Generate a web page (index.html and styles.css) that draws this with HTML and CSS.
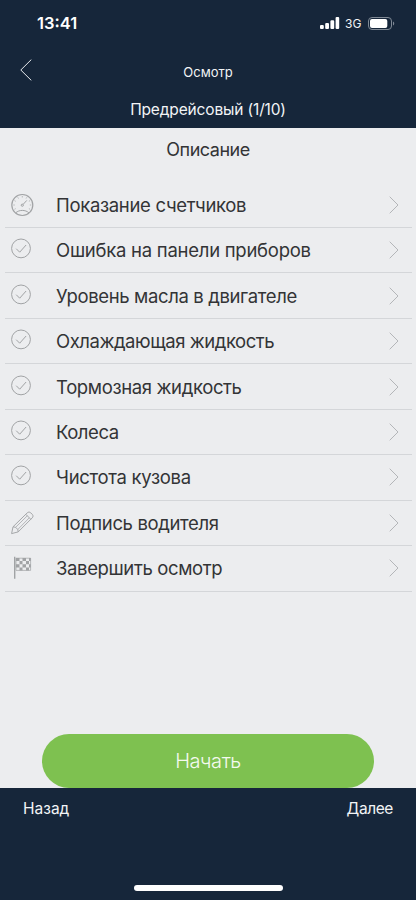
FILE: index.html
```
<!DOCTYPE html>
<html lang="ru">
<head>
<meta charset="utf-8">
<meta name="viewport" content="width=device-width, initial-scale=1">
<title>Осмотр</title>
<link rel="stylesheet" href="styles.css">
</head>
<body>
<svg class="defs" width="0" height="0">
  <defs>
    <symbol id="chevron" viewBox="0 0 10 18"><path d="M.7 .7 9 9 .7 17.3"/></symbol>
    <symbol id="check" viewBox="0 0 24 24"><circle cx="11" cy="10.4" r="9.4"/><path d="m6.2 10.7 3.5 3.5 6.4-7.2"/></symbol>
    <symbol id="gauge" viewBox="0 0 24 24">
      <circle cx="12.3" cy="12" r="10.5" stroke-width="1.2"/>
      <path d="M5.7 19.8c3.5-3.2 9.7-3.2 13.2 0"/>
      <circle cx="12.3" cy="12.2" r="1.1"/>
      <path d="m13.1 11.4 3.7-4"/>
      <path d="M12.3 3v1.5M7.8 4.3l.7 1.2M4.5 7.6l1.2.7M3.3 12h1.5M4.5 16.3l1.2-.7M16.8 4.3l-.7 1.2M20.1 7.6l-1.2.7M21.3 12h-1.5M20.1 16.3l-1.2-.7" stroke-width=".7"/>
    </symbol>
    <symbol id="pencil" viewBox="0 0 24 24">
      <path d="M1.600 22.600 3 15.800 17.200 1.900c1.100-1.100 2.500-1.100 3.600 0l1.400 1.400c1.100 1.100 1.100 2.500 0 3.600L8.200 20.900zM3 15.800l2.600.5 2.200 2.200.4 2.400M15.800 3.300l5 5" stroke-width=".95"/>
      <path d="M5.600 16.300 17.300 4.800M7.800 18.500 19.300 6.800" stroke-width=".75"/>
    </symbol>
    <symbol id="flag" viewBox="0 0 24 24">
      <path d="M4.700 .7v22" stroke-width="1.400"/>
      <path d="M6 2.200h14.600v12.200H6z" stroke-width=".7"/>
      <path class="fill" d="M6 2h3.500v3H6zM12.500 2h3.500v3h-3.500zM9.500 5h3v3.200h-3zM16 5h3v3.200h-3zM6 8.200h3.500v3.200H6zM12.500 8.200h3.500v3.200h-3.500zM19 8.200h1.800v3.200H19zM9.500 11.400h3v3.200h-3zM16 11.400h3v3.200h-3zM19 2h1.800v3H19z"/>
    </symbol>
  </defs>
</svg>
<div class="screen">
  <header class="header">
    <div class="status">
      <span class="time">13:41</span>
      <div class="indicators">
        <svg class="signal" viewBox="0 0 20 12"><rect x="0" y="8" width="3.8" height="4" rx="1.1"/><rect x="5.2" y="6" width="3.8" height="6" rx="1.1"/><rect x="10.4" y="3.3" width="3.8" height="8.7" rx="1.1"/><rect x="15.6" y="0" width="3.6" height="12" rx="1.1"/></svg>
        <span class="network">3G</span>
        <svg class="battery" viewBox="0 0 27 13"><rect class="shell" x=".5" y=".5" width="23" height="12" rx="3.5"/><rect x="2" y="2" width="17.3" height="9" rx="2"/><path class="cap" d="M25 4.500v4c1.700-.7 1.700-3.300 0-4z"/></svg>
      </div>
    </div>
    <nav class="navbar">
      <svg class="back" viewBox="0 0 12 22"><path d="M11.300.6.800 11l10.500 10.400"/></svg>
      <h1 class="title">Осмотр</h1>
    </nav>
    <p class="subtitle">Предрейсовый (1/10)</p>
  </header>
  <main class="content">
    <h2 class="heading">Описание</h2>
    <ul class="list">
      <li class="row"><svg class="icon"><use href="#gauge"/></svg><span class="label normal">Показание счетчиков</span><svg class="arrow"><use href="#chevron"/></svg></li>
      <li class="row"><svg class="icon"><use href="#check"/></svg><span class="label loose">Ошибка на панели приборов</span><svg class="arrow"><use href="#chevron"/></svg></li>
      <li class="row"><svg class="icon"><use href="#check"/></svg><span class="label">Уровень масла в двигателе</span><svg class="arrow"><use href="#chevron"/></svg></li>
      <li class="row"><svg class="icon"><use href="#check"/></svg><span class="label tight">Охлаждающая жидкость</span><svg class="arrow"><use href="#chevron"/></svg></li>
      <li class="row"><svg class="icon"><use href="#check"/></svg><span class="label">Тормозная жидкость</span><svg class="arrow"><use href="#chevron"/></svg></li>
      <li class="row"><svg class="icon"><use href="#check"/></svg><span class="label tight">Колеса</span><svg class="arrow"><use href="#chevron"/></svg></li>
      <li class="row"><svg class="icon"><use href="#check"/></svg><span class="label normal">Чистота кузова</span><svg class="arrow"><use href="#chevron"/></svg></li>
      <li class="row"><svg class="icon"><use href="#pencil"/></svg><span class="label">Подпись водителя</span><svg class="arrow"><use href="#chevron"/></svg></li>
      <li class="row"><svg class="icon"><use href="#flag"/></svg><span class="label">Завершить осмотр</span><svg class="arrow"><use href="#chevron"/></svg></li>
    </ul>
    <button class="start">Начать</button>
  </main>
  <footer class="footer">
    <div class="actions"><span class="prev">Назад</span><span class="next">Далее</span></div>
    <div class="home"></div>
  </footer>
</div>
</body>
</html>
```
FILE: styles.css
```
* { box-sizing: border-box; margin: 0; padding: 0; }
body { font-family: Inter, "Liberation Sans", sans-serif; background: #ecedef; }
.defs { position: absolute; }
.screen { display: flex; flex-direction: column; width: 416px; height: 900px; overflow: hidden; }
.header { height: 128px; flex: none; background: #16263a; color: #f2f4f6; }
.status { display: flex; justify-content: space-between; height: 46px; padding: 0 21px 0 37px; align-items: center; }
.time { font-size: 16.5px; font-weight: 600; line-height: 20px; color: #fff; }
.indicators { display: flex; align-items: center; }
.signal { width: 20px; height: 12px; fill: #fff; }
.network { width: 17px; margin: 1px 6px 0 5px; font-size: 12px; line-height: 14px; font-weight: 400; }
.battery { width: 27px; height: 13px; fill: #fff; }
.battery .shell { fill: none; stroke: #7f8995; stroke-width: 1; }
.battery .cap { fill: #7f8995; }
.navbar { display: grid; grid-template-columns: 20px 1fr 20px; height: 50px; align-items: start; }
.back { width: 12px; height: 22px; margin: 13px 0 0 20px; fill: none; stroke: #e8ebee; stroke-width: 1; }
.title { text-align: center; font-size: 13px; line-height: 20px; font-weight: 400; margin-top: 16px; }
.subtitle { text-align: center; font-size: 15.5px; line-height: 22px; letter-spacing: -.15px; margin-top: 3px; }
.content { display: flex; flex-direction: column; height: 660px; flex: none; background: #ecedef; color: #333436; }
.heading { text-align: center; font-size: 18px; line-height: 24px; font-weight: 400; letter-spacing: -.5px; margin-top: 10px; }
.list { list-style: none; margin: 20.6px 4px 0 5px; }
.row { display: flex; align-items: center; height: 45.45px; padding: 0 13px 0 5px; border-bottom: 1px solid #d4d6d9; }
.icon { width: 24px; height: 24px; flex: none; fill: none; stroke: #a1a3a5; stroke-width: 1; }
.fill { fill: #a1a3a5; stroke: none; }
.label { flex: 1; margin: 0 0 0 22px; font-size: 18.5px; line-height: 26px; letter-spacing: -.37px; white-space: nowrap; }
.label.loose { letter-spacing: -.26px; }
.label.normal { letter-spacing: -.32px; }
.label.tight { letter-spacing: -.46px; }
.arrow { width: 10px; height: 18px; flex: none; fill: none; stroke: #b4b6b9; stroke-width: 1; }
.start { margin: auto 42px 0; height: 54px; border: 0; border-radius: 27px; background: #7ec150; color: #f4faef; font: 300 20px/54px Inter, sans-serif; letter-spacing: -.45px; }
.footer { flex: 1; display: flex; flex-direction: column; justify-content: space-between; align-items: center; background: #16263a; color: #f2f4f6; padding-bottom: 9px; }
.actions { display: flex; justify-content: space-between; width: 100%; padding: 10px 23px 0; font-size: 15.5px; line-height: 22px; }
.next { letter-spacing: -.4px; }
.home { width: 149px; height: 6px; border-radius: 3px; background: #fff; }
```
